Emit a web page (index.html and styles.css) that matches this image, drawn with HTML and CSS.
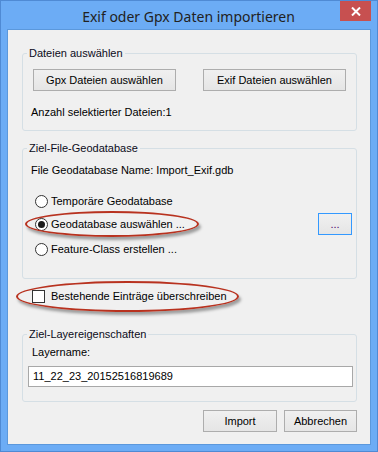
FILE: index.html
```html
<!DOCTYPE html>
<html lang="de">
<head>
<meta charset="utf-8">
<title>Exif oder Gpx Daten importieren</title>
<link rel="stylesheet" href="styles.css">
</head>
<body>
<div class="window">
  <div class="titlebar">
    <span class="title">Exif oder Gpx Daten importieren</span>
    <button class="close" aria-label="Schließen">
      <svg width="10" height="9" viewBox="0 0 10 9"><path d="M1 0.5 L9 8.5 M9 0.5 L1 8.5" stroke="#fff" stroke-width="2" fill="none"/></svg>
    </button>
  </div>
  <div class="client">
    <div class="group g1">
      <div class="legend">Dateien auswählen</div>
      <div class="btnrow">
        <button class="btn wide">Gpx Dateien auswählen</button>
        <button class="btn wide">Exif Dateien auswählen</button>
      </div>
      <div class="label count">Anzahl selektierter Dateien:1</div>
    </div>

    <div class="group g2">
      <div class="legend">Ziel-File-Geodatabase</div>
      <div class="label fname">File Geodatabase Name: Import_Exif.gdb</div>
      <div class="radio-row r1"><span class="radio"></span><span class="label">Temporäre Geodatabase</span></div>
      <div class="radio-row r2"><span class="radio checked"></span><span class="label">Geodatabase auswählen ...</span><button class="btn dots">...</button></div>
      <div class="radio-row r3"><span class="radio"></span><span class="label">Feature-Class erstellen ...</span></div>
    </div>

    <div class="check-row"><span class="checkbox"></span><span class="label">Bestehende Einträge überschreiben</span></div>

    <div class="group g3">
      <div class="legend">Ziel-Layereigenschaften</div>
      <div class="label lname">Layername:</div>
      <div class="input">11_22_23_20152516819689</div>
    </div>

    <div class="footer">
      <button class="btn import">Import</button>
      <button class="btn cancel">Abbrechen</button>
    </div>

    <div class="mark mark1"></div>
    <div class="mark mark2"></div>
  </div>
</div>
</body>
</html>
```

FILE: styles.css
```css
* { box-sizing: border-box; }
html, body { margin: 0; padding: 0; background: #6aabf4; }
body { width: 378px; height: 452px; overflow: hidden; }

.window {
  width: 378px;
  height: 452px;
  border: 1px solid #4f8ad4;
  background: #6cacf5;
  padding: 0 6px 6px 6px;
  display: flex;
  flex-direction: column;
  font-family: "Liberation Sans", Arial, sans-serif;
  font-size: 11px;
  color: #000;
}

.titlebar {
  position: relative;
  height: 28px;
  flex: none;
  display: flex;
  justify-content: center;
  align-items: flex-start;
}
.title {
  font-family: "Noto Sans", "Open Sans", sans-serif;
  font-size: 14px;
  line-height: 20px;
  margin-top: 6px;
  color: #222;
  margin-left: -1px;
}
.close {
  position: absolute;
  top: 0;
  right: 0;
  width: 31px;
  height: 20px;
  border: 0;
  padding: 0;
  margin: 0;
  background: #c75050;
  display: flex;
  align-items: center;
  justify-content: center;
}

.client {
  position: relative;
  flex: 1;
  border: 1px solid #5b98dc;
  background: #f0f0f0;
  padding: 0 13px 0 14px;
  display: flex;
  flex-direction: column;
}

.label { line-height: 13px; white-space: nowrap; }

.group {
  border: 1px solid #d5dfe5;
  border-radius: 3px;
  display: flex;
  flex-direction: column;
}
.legend {
  margin: -7px 0 0 4px;
  padding: 0 2px;
  line-height: 13px;
  background: #f0f0f0;
  align-self: flex-start;
  color: #0b0b20;
}

.g1 { margin-top: 23px; padding-bottom: 11px; }
.btnrow {
  margin-top: 9px;
  padding: 0 10px;
  display: flex;
  justify-content: space-between;
}
.count { margin: 15px 0 0 8px; }

.btn {
  font-family: "Liberation Sans", Arial, sans-serif;
  font-size: 11px;
  color: #000;
  height: 22px;
  padding: 0;
  margin: 0;
  border: 1px solid #adadad;
  background: linear-gradient(#f0f0f0, #e5e5e5);
  line-height: 20px;
  text-align: center;
}
.btn.wide { width: 143px; }

.g2 { margin-top: 17px; padding-bottom: 18px; }
.fname { margin: 9px 0 0 8px; }
.radio-row {
  height: 22px;
  display: flex;
  align-items: center;
  padding: 0 4px 0 12px;
  gap: 3px;
}
.r1 { margin-top: 13px; }
.r2 { margin-top: 1px; }
.r3 { margin-top: 3px; }
.radio {
  width: 13px;
  height: 13px;
  border-radius: 50%;
  border: 1px solid #333;
  background: #fff;
  flex: none;
  display: flex;
  align-items: center;
  justify-content: center;
}
.radio.checked::after {
  content: "";
  width: 7px;
  height: 7px;
  border-radius: 50%;
  background: #1a1a1a;
}
.btn.dots {
  margin-left: auto;
  width: 34px;
  border-color: #3399ff;
  margin-top: -1px;
  color: #4a0a6a;
}

.check-row {
  margin: 7px 0 0 10px;
  height: 20px;
  display: flex;
  align-items: center;
  gap: 6px;
}
.checkbox {
  width: 13px;
  height: 13px;
  border: 1px solid #333;
  background: #fff;
  flex: none;
}

.g3 { margin-top: 28px; padding-bottom: 14px; }
.lname { margin: 5px 0 0 9px; }
.input {
  margin: 7px 0 0 5px;
  width: 325px;
  height: 21px;
  border: 1px solid #a8a8a8;
  background: #fff;
  padding: 0 4px;
  line-height: 19px;
  white-space: nowrap;
}

.footer {
  margin-top: 8px;
  display: flex;
  justify-content: flex-end;
  gap: 7px;
}
.btn.import { width: 74px; }
.btn.cancel { width: 73px; }

.mark {
  position: absolute;
  border: 2px solid #b8321f;
  border-radius: 50%;
  box-shadow: 2px 3px 3px rgba(0, 0, 0, 0.35);
  pointer-events: none;
}
.mark1 { left: 17px; top: 181px; width: 174px; height: 26px; }
.mark2 { left: 8px; top: 251px; width: 223px; height: 31px; }
```
